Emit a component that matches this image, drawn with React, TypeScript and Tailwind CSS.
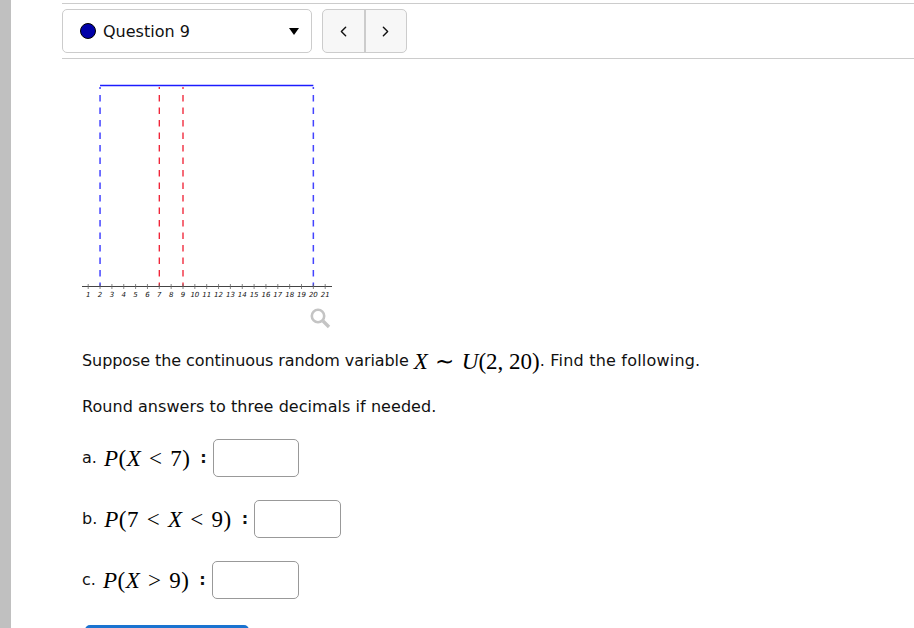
import { ChevronLeft, ChevronRight } from "lucide-react";

const ticks = Array.from({ length: 21 }, (_, i) => i + 1);
const tx = (n: number) => 8.2 + (n - 1) * 11.85;

const DistributionGraph = () => (
  <svg width="260" height="240" viewBox="0 0 260 240" className="block">
    {[2, 20].map((n) => (
      <line key={n} x1={tx(n)} x2={tx(n)} y1="7" y2="206" stroke="#4444ff" strokeWidth="1.5" strokeDasharray="6.5 6" strokeDashoffset="4.5" />
    ))}
    {[7, 9].map((n) => (
      <line key={n} x1={tx(n)} x2={tx(n)} y1="7" y2="206" stroke="#f01c30" strokeWidth="1.3" strokeDasharray="6.5 6" strokeDashoffset="4.5" />
    ))}
    <line x1={tx(2)} x2={tx(20)} y1="5.5" y2="5.5" stroke="#1c1cff" strokeWidth="1.4" />
    <line x1="2" x2="252" y1="206.5" y2="206.5" stroke="#444" strokeWidth="1" />
    {ticks.map((n) => (
      <g key={n}>
        <line x1={tx(n)} x2={tx(n)} y1="204" y2="209" stroke="#666" strokeWidth="0.8" />
        <text x={tx(n)} y="217" textAnchor="middle" fontSize="7" fontStyle="italic" fontFamily="'DejaVu Sans', sans-serif" fill="#111">
          {n}
        </text>
      </g>
    ))}
  </svg>
);

const M = ({ children }: { children: React.ReactNode }) => (
  <span className="font-['Liberation_Serif',serif] text-[23px] leading-none tracking-[0.5px] text-black">{children}</span>
);

const I = ({ children }: { children: React.ReactNode }) => <i className="italic">{children}</i>;

const R = ({ children }: { children: React.ReactNode }) => <span className="mx-[7.75px]">{children}</span>;

const Answer = ({ label, width, children }: { label: string; width: string; children: React.ReactNode }) => (
  <div className="flex items-center h-[38px]">
    <span className="mr-[7px]">{label}</span>
    <M>{children}</M>
    <span className="ml-[10px] mr-[6px] font-bold">:</span>
    <div className={`${width} h-[38px] rounded-[5px] border border-[#999] bg-white`} />
  </div>
);

export default function App() {
  return (
    <div className="h-[628px] w-[914px] overflow-hidden bg-white flex font-['DejaVu_Sans',sans-serif] text-[16px] text-[#111]">
      <div className="w-[11px] shrink-0 bg-[#c0c0c0]" />
      <div className="flex-1 pl-[51px] pt-[3px]">
        <div className="border-t border-[#ccc] pt-[5px] pb-[5px] border-b flex">
          <div className="w-[250px] h-[44px] rounded-[5px] border border-[#ccc] flex items-center pl-[17px] pr-[11px]">
            <span className="w-[16px] h-[16px] rounded-full bg-[#0000a8] border border-black mr-[7px]" />
            <span className="pt-[1px]">Question 9</span>
            <span className="ml-auto mr-[1px] w-0 h-0 border-x-[5px] border-x-transparent border-t-[7px] border-t-black" />
          </div>
          <div className="ml-[10px] flex h-[44px] w-[85px] rounded-[5px] border border-[#ccc] bg-[#f7f7f7]">
            <div className="flex-1 flex items-center justify-center border-r-2 border-[#ccc]">
              <ChevronLeft size={17} strokeWidth={2} color="#111" />
            </div>
            <div className="flex-1 flex items-center justify-center">
              <ChevronRight size={17} strokeWidth={2} color="#111" />
            </div>
          </div>
        </div>
        <div className="pl-[18px] pt-[21px] relative">
          <DistributionGraph />
          <svg width="24" height="24" viewBox="0 0 24 24" className="absolute left-[246px] top-[247px]" fill="none" stroke="#c4c4c4">
            <circle cx="10" cy="10" r="6.2" strokeWidth="2.6" />
            <line x1="15" y1="15" x2="21" y2="21" strokeWidth="3.4" />
          </svg>
        </div>
        <div className="pl-[20px]">
          <p className="mt-[27px] h-[28px] flex items-center">
            <span className="whitespace-pre tracking-[-0.08px]">Suppose the continuous random variable </span>
            <M><I>X</I><span className="mx-[7px]">∼</span><span className="tracking-normal"><I>U</I>(2, 20)</span></M>
            <span className="whitespace-pre tracking-[0.2px]">. Find the following.</span>
          </p>
          <p className="mt-[18px] h-[28px] flex items-center tracking-[0.05px]">Round answers to three decimals if needed.</p>
          <div className="mt-[18px]">
            <Answer label="a." width="w-[86px]"><I>P</I>(<I>X</I><R>&lt;</R>7)</Answer>
          </div>
          <div className="mt-[23px]">
            <Answer label="b." width="w-[87px]"><I>P</I>(7<R>&lt;</R><I>X</I><R>&lt;</R>9)</Answer>
          </div>
          <div className="mt-[23px]">
            <Answer label="c." width="w-[87px]"><I>P</I>(<I>X</I><R>&gt;</R>9)</Answer>
          </div>
          <div className="mt-[26px] ml-[3px] w-[164px] h-[40px] rounded-[5px] bg-[#1a73d0]" />
        </div>
      </div>
    </div>
  );
}
